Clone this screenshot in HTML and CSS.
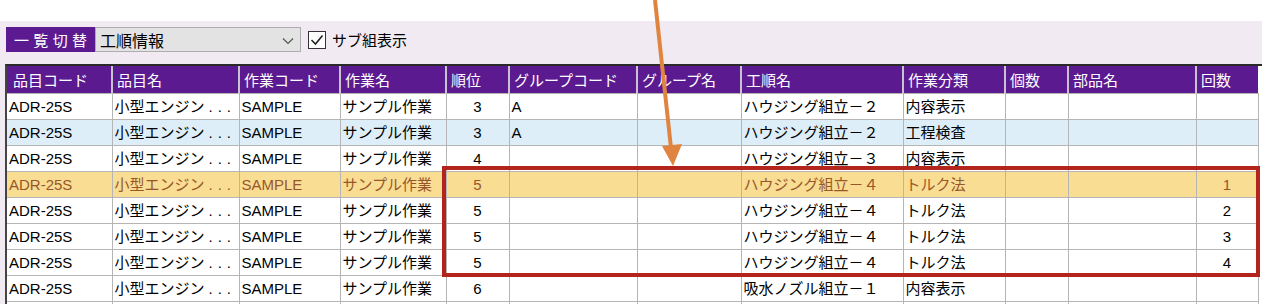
FILE: index.html
```html
<!DOCTYPE html>
<html lang="ja">
<head>
    <meta charset="UTF-8">
    <title>工順情報</title>
    <link rel="stylesheet" href="styles.css">
</head>
<body>
    <div class="panel">
        <div class="toolbar">
            <div class="switch-label">一 覧 切 替</div>
            <div class="select">
                <span>工順情報</span>
                <svg class="chevron" width="12" height="8" viewBox="0 0 12 8"><path d="M1 1.5 L6 6.5 L11 1.5" fill="none" stroke="#555" stroke-width="1.2"/></svg>
            </div>
            <label class="check">
                <svg width="18" height="18" viewBox="0 0 18 18"><rect x="0.5" y="0.5" width="17" height="17" fill="#fff" stroke="#333"/><path d="M3.5 9 L7.5 13 L14.5 4.5" fill="none" stroke="#222" stroke-width="1.6"/></svg>
                <span>サブ組表示</span>
            </label>
        </div>

        <div class="grid">
            <table>
                <colgroup>
                    <col style="width:105px"><col style="width:127px"><col style="width:101px"><col style="width:106px">
                    <col style="width:63px"><col style="width:128px"><col style="width:104px"><col style="width:162px">
                    <col style="width:102px"><col style="width:63px"><col style="width:128px"><col style="width:62px">
                </colgroup>
                <thead>
                    <tr>
                        <th>品目コード</th><th>品目名</th><th>作業コード</th><th>作業名</th><th>順位</th><th>グループコード</th>
                        <th>グループ名</th><th>工順名</th><th>作業分類</th><th>個数</th><th>部品名</th><th>回数</th>
                    </tr>
                </thead>
                <tbody>
                    <tr>
                        <td>ADR-25S</td><td>小型エンジン<span class="dots">...</span></td><td>SAMPLE</td><td>サンプル作業</td><td class="num">3</td><td>A</td>
                        <td></td><td>ハウジング組立－２</td><td>内容表示</td><td></td><td></td><td></td>
                    </tr>
                    <tr class="alt">
                        <td>ADR-25S</td><td>小型エンジン<span class="dots">...</span></td><td>SAMPLE</td><td>サンプル作業</td><td class="num">3</td><td>A</td>
                        <td></td><td>ハウジング組立－２</td><td>工程検査</td><td></td><td></td><td></td>
                    </tr>
                    <tr>
                        <td>ADR-25S</td><td>小型エンジン<span class="dots">...</span></td><td>SAMPLE</td><td>サンプル作業</td><td class="num">4</td><td></td>
                        <td></td><td>ハウジング組立－３</td><td>内容表示</td><td></td><td></td><td></td>
                    </tr>
                    <tr class="selected">
                        <td>ADR-25S</td><td>小型エンジン<span class="dots">...</span></td><td>SAMPLE</td><td>サンプル作業</td><td class="num">5</td><td></td>
                        <td></td><td>ハウジング組立－４</td><td>トルク法</td><td></td><td></td><td class="num">1</td>
                    </tr>
                    <tr>
                        <td>ADR-25S</td><td>小型エンジン<span class="dots">...</span></td><td>SAMPLE</td><td>サンプル作業</td><td class="num">5</td><td></td>
                        <td></td><td>ハウジング組立－４</td><td>トルク法</td><td></td><td></td><td class="num">2</td>
                    </tr>
                    <tr>
                        <td>ADR-25S</td><td>小型エンジン<span class="dots">...</span></td><td>SAMPLE</td><td>サンプル作業</td><td class="num">5</td><td></td>
                        <td></td><td>ハウジング組立－４</td><td>トルク法</td><td></td><td></td><td class="num">3</td>
                    </tr>
                    <tr>
                        <td>ADR-25S</td><td>小型エンジン<span class="dots">...</span></td><td>SAMPLE</td><td>サンプル作業</td><td class="num">5</td><td></td>
                        <td></td><td>ハウジング組立－４</td><td>トルク法</td><td></td><td></td><td class="num">4</td>
                    </tr>
                    <tr>
                        <td>ADR-25S</td><td>小型エンジン<span class="dots">...</span></td><td>SAMPLE</td><td>サンプル作業</td><td class="num">6</td><td></td>
                        <td></td><td>吸水ノズル組立－１</td><td>内容表示</td><td></td><td></td><td></td>
                    </tr>
                    <tr>
                        <td></td><td></td><td></td><td></td><td></td><td></td>
                        <td></td><td></td><td></td><td></td><td></td><td></td>
                    </tr>
                </tbody>
            </table>
        </div>
    </div>

    <!-- 注釈（矢印と赤枠） -->
    <svg class="annotation" width="1262" height="304" viewBox="0 0 1262 304">
        <rect x="444" y="168" width="814" height="107" fill="none" stroke="#b3241c" stroke-width="4"/>
        <line x1="655" y1="0" x2="671" y2="148" stroke="#e08540" stroke-width="4"/>
        <polygon points="662,146 682,144 673,166" fill="#e08540"/>
    </svg>
</body>
</html>
```

FILE: styles.css
```css
body {
    margin: 0;
    font-family: "Noto Sans CJK JP", "Liberation Sans", sans-serif;
    background: #fff;
    color: #000;
    position: relative;
    height: 304px;
    overflow: hidden;
}
.panel {
    margin-top: 21px;
    background: #f1eaf2;
    height: 283px;
    padding: 6px 0 0 5px;
    box-sizing: border-box;
    overflow: hidden;
}
.toolbar {
    display: flex;
    align-items: center;
    height: 25px;
    margin-left: 1px;
}
.switch-label {
    width: 89px;
    height: 25px;
    background: #5c1a90;
    color: #fff;
    font-size: 15px;
    line-height: 25px;
    text-align: center;
    word-spacing: 1px;
}
.select {
    width: 206px;
    height: 25px;
    box-sizing: border-box;
    background: #e3e3e3;
    border: 1px solid #adadad;
    display: flex;
    align-items: center;
    justify-content: space-between;
    padding: 0 6px 0 4px;
    font-size: 16px;
}
.select .chevron {
    margin-top: 2px;
}
.check {
    display: flex;
    align-items: center;
    gap: 6px;
    margin-left: 7px;
    font-size: 15px;
}
.grid {
    margin-top: 12px;
    border-top: 2px solid #2a2a2a;
    border-left: 2px solid #444;
    background: #fff;
}
table {
    border-collapse: collapse;
    table-layout: fixed;
    width: 1251px;
    font-size: 15px;
}
th {
    background: #5c1a90;
    color: #fff;
    font-weight: normal;
    text-align: left;
    height: 27px;
    padding: 0 0 0 4px;
    border-left: 2px solid #c9c3cf;
    line-height: 27px;
    white-space: nowrap;
    overflow: hidden;
}
th:first-child {
    border-left: none;
    padding-left: 6px;
}
td {
    height: 25px;
    padding: 0 2px;
    border: 1px solid #b5b5b5;
    line-height: 24px;
    white-space: nowrap;
    overflow: hidden;
    font-family: "Liberation Sans", "Noto Sans CJK JP", sans-serif;
}
td:first-child {
    border-left: none;
}
td.num {
    text-align: center;
}
.dots {
    letter-spacing: 5px;
    margin-left: 4px;
}
tr.alt td {
    background: #ddeef9;
}
tr.selected td {
    background: #f8dd93;
    color: #98572b;
}
.annotation {
    position: absolute;
    left: 0;
    top: 0;
    pointer-events: none;
}
```
